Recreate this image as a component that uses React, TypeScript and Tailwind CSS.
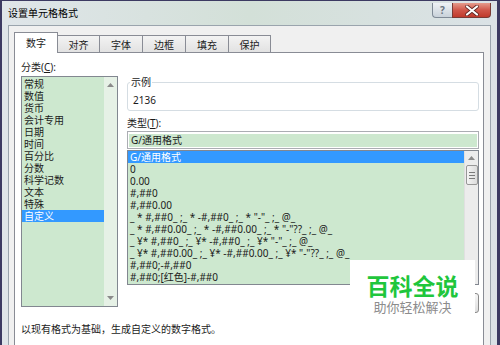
import React from "react";

const categories = [
  "常规",
  "数值",
  "货币",
  "会计专用",
  "日期",
  "时间",
  "百分比",
  "分数",
  "科学记数",
  "文本",
  "特殊",
  "自定义",
];

const formats = [
  "G/通用格式",
  "0",
  "0.00",
  "#,##0",
  "#,##0.00",
  '_ * #,##0_ ;_ * -#,##0_ ;_ * "-"_ ;_ @_',
  '_ * #,##0.00_ ;_ * -#,##0.00_ ;_ * "-"??_ ;_ @_',
  '_ ¥* #,##0_ ;_ ¥* -#,##0_ ;_ ¥* "-"_ ;_ @_',
  '_ ¥* #,##0.00_ ;_ ¥* -#,##0.00_ ;_ ¥* "-"??_ ;_ @_',
  "#,##0;-#,##0",
  "#,##0;[红色]-#,##0",
];

const tabs = [
  { label: "数字", w: "w-[44px]" },
  { label: "对齐", w: "w-[42px]" },
  { label: "字体", w: "w-[43px]" },
  { label: "边框", w: "w-[43px]" },
  { label: "填充", w: "w-[43px]" },
  { label: "保护", w: "w-[42px]" },
];

function Arrow({ up }: { up?: boolean }) {
  return (
    <svg viewBox="0 0 7 4" className="block w-[7px] h-[4px]" aria-hidden="true">
      <path d={up ? "M0 4 L3.5 0 L7 4 Z" : "M0 0 L3.5 4 L7 0 Z"} fill="#8a8a8a" />
    </svg>
  );
}

function CloseGlyph() {
  return (
    <svg viewBox="0 0 14 11" className="block w-[14px] h-[11px]" aria-hidden="true">
      <path d="M2 1.5 L12 9.5 M12 1.5 L2 9.5" stroke="#5a2320" strokeWidth="3.6" strokeLinecap="round" />
      <path d="M2 1.5 L12 9.5 M12 1.5 L2 9.5" stroke="#ffffff" strokeWidth="2.2" strokeLinecap="round" />
    </svg>
  );
}

export default function App() {
  return (
    <div className="relative w-[500px] h-[345px] overflow-hidden bg-[#3c3a62] pl-[2px] pt-[1px] pr-[3px] font-['Noto_Sans','Noto_Sans_CJK_SC',sans-serif] text-[10px] leading-[12px] text-[#1b1b1b]">
      <div className="h-full flex flex-col bg-gradient-to-r from-[#dfe5e9] via-[#d3e0d8] to-[#dbe2e6]">
        {/* Title bar */}
        <div className="h-[24px] shrink-0 flex items-start pl-[6px] pr-[6px]">
          <div className="self-center text-black">设置单元格格式</div>
          <div className="ml-auto flex mt-[2px]">
            <div className="w-[20px] h-[15px] rounded-bl-[4px] border border-r-0 border-t-0 border-[#7f8a96] bg-gradient-to-b from-[#eef2f5] to-[#c9d2da] flex items-center justify-center text-[10px] font-bold text-[#6a7580]">
              ?
            </div>
            <div className="w-[39px] h-[15px] rounded-br-[4px] border border-t-0 border-[#7a3a34] bg-gradient-to-b from-[#e49a8c] via-[#d0574a] to-[#c0392b] flex items-center justify-center">
              <CloseGlyph />
            </div>
          </div>
        </div>

        {/* Client area */}
        <div className="flex-1 flex px-[6px] min-h-0">
          <div className="flex-1 min-w-0 bg-[#f0f0f0] border-l border-t border-r border-[#9aa4ad] pl-[5px] pr-[6px] pt-[6px] flex flex-col">
            {/* Tabs */}
            <div className="relative z-10 flex items-end h-[21px] -mb-[1px]">
              {tabs.map((t, i) =>
                i === 0 ? (
                  <div
                    key={t.label}
                    className={`${t.w} h-[21px] bg-white border-l border-t border-r border-[#898c95] flex items-center justify-center pb-[1px]`}
                  >
                    {t.label}
                  </div>
                ) : (
                  <div
                    key={t.label}
                    className={`${t.w} h-[17px] mb-[1px] border-t border-r border-[#898c95] bg-gradient-to-b from-[#f3f3f3] to-[#e2e2e2] flex items-center justify-center pt-[1px]`}
                  >
                    {t.label}
                  </div>
                )
              )}
            </div>

            {/* Panel */}
            <div className="flex-1 bg-white border border-b-0 border-[#898c95] pl-[6px] pr-[4px] pt-[8px] flex flex-col">
              <div className="flex gap-[9px]">
                {/* Category column */}
                <div className="w-[97px] flex flex-col">
                  <div className="h-[12px]">
                    分类(<span className="underline">C</span>):
                  </div>
                  <div className="mt-[3px] h-[231px] border border-[#828790] bg-[#cde8cf] flex">
                    <div className="flex-1 pt-[1px]">
                      {categories.map((c, i) => (
                        <div
                          key={c}
                          className={`h-[12px] pl-[2px] ${i === categories.length - 1 ? "bg-[#3399ff] text-white" : ""}`}
                        >
                          {c}
                        </div>
                      ))}
                    </div>
                    <div className="w-[13px] bg-[#e6f1e6] flex flex-col items-center justify-between pt-[6px] pb-[6px]">
                      <Arrow up />
                      <Arrow />
                    </div>
                  </div>
                </div>

                {/* Right column */}
                <div className="flex-1 min-w-0 flex flex-col">
                  <fieldset className="mt-[15px] border border-[#d5dde3] rounded-[3px] px-[2px] pb-[4px]">
                    <legend className="px-[1px] leading-[12px]">示例</legend>
                    <div className="pt-[6px] pl-[3px] h-[18px]">2136</div>
                  </fieldset>

                  <div className="mt-[6px] h-[12px]">
                    类型(<span className="underline">T</span>):
                  </div>
                  <div className="mt-[2px] h-[18px] border border-[#abadb3] bg-white px-[1px] pt-[2px] pb-[1px]">
                    <div className="h-[13px] bg-[#cde8cf] pl-[2px] leading-[13px]">G/通用格式</div>
                  </div>

                  <div className="mt-[1px] h-[135px] border border-[#828790] bg-[#cde8cf] flex">
                    <div className="flex-1 min-w-0">
                      {formats.map((f, i) => (
                        <div
                          key={f}
                          className={`h-[12px] pl-[2px] whitespace-pre ${i === 0 ? "bg-[#3399ff] text-white" : ""}`}
                        >
                          {f}
                        </div>
                      ))}
                    </div>
                    <div className="w-[14px] bg-[#ececec] border-l border-[#e0e0e0] flex flex-col items-center pt-[5px]">
                      <Arrow up />
                      <div className="mt-[5px] w-[12px] h-[20px] rounded-[2px] border border-[#979797] bg-gradient-to-r from-[#f4f4f4] to-[#dcdcdc] flex flex-col items-center justify-center gap-[2px]">
                        <div className="w-[6px] h-px bg-[#7a7a7a]" />
                        <div className="w-[6px] h-px bg-[#7a7a7a]" />
                        <div className="w-[6px] h-px bg-[#7a7a7a]" />
                      </div>
                    </div>
                  </div>

                  {/* Button mostly hidden behind the watermark */}
                  <div className="mt-[8px] flex justify-end">
                    <div className="w-[60px] h-[20px] rounded-[3px] border border-[#8a8a8a] bg-gradient-to-b from-[#f6f6f6] to-[#dddddd]" />
                  </div>
                </div>
              </div>

              <div className="mt-[10px] h-[12px]">以现有格式为基础，生成自定义的数字格式。</div>
            </div>
          </div>
        </div>
      </div>

      {/* Watermark overlay */}
      <div className="absolute left-[350px] top-[260px] w-[125px] h-[85px] bg-white flex flex-col items-center">
        <div className="mt-[12px] text-[23px] leading-[26px] font-bold text-[#1fc63c] font-['Noto_Sans_CJK_SC',sans-serif]">
          百科全说
        </div>
        <div className="mt-[1px] text-[13px] leading-[16px] text-[#8c8c8c] font-['Noto_Sans_CJK_SC',sans-serif]">
          助你轻松解决
        </div>
      </div>
    </div>
  );
}
